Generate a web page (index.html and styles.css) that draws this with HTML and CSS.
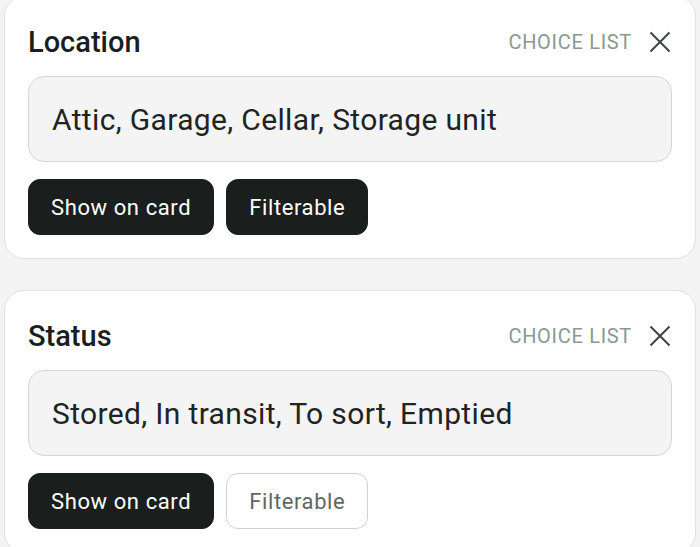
FILE: index.html
```html
<!DOCTYPE html>
<html lang="en">
<head>
<meta charset="utf-8">
<title>Fields</title>
<link rel="stylesheet" href="styles.css">
</head>
<body>
<div class="list">
  <section class="card">
    <div class="card-head">
      <h2 class="title">Location</h2>
      <div class="meta">
        <span class="type">CHOICE LIST</span>
        <svg class="close" viewBox="0 0 24 24" width="24" height="24" aria-hidden="true"><path d="M2.5 2.5 L21.5 21.5 M21.5 2.5 L2.5 21.5"/></svg>
      </div>
    </div>
    <div class="field">Attic, Garage, Cellar, Storage unit</div>
    <div class="chips">
      <span class="chip on">Show on card</span>
      <span class="chip on">Filterable</span>
    </div>
  </section>
  <section class="card">
    <div class="card-head">
      <h2 class="title">Status</h2>
      <div class="meta">
        <span class="type">CHOICE LIST</span>
        <svg class="close" viewBox="0 0 24 24" width="24" height="24" aria-hidden="true"><path d="M2.5 2.5 L21.5 21.5 M21.5 2.5 L2.5 21.5"/></svg>
      </div>
    </div>
    <div class="field">Stored, In transit, To sort, Emptied</div>
    <div class="chips">
      <span class="chip on">Show on card</span>
      <span class="chip off">Filterable</span>
    </div>
  </section>
</div>
</body>
</html>
```
FILE: styles.css
```css
html, body {
  margin: 0;
  padding: 0;
  background: #f2f3f2;
  font-family: Roboto, "Noto Sans", "Liberation Sans", sans-serif;
  color: #1a1f1e;
  overflow: hidden;
}
.list {
  margin-top: -4px;
  padding: 0 4px;
  display: flex;
  flex-direction: column;
  gap: 31px;
}
.card {
  background: #ffffff;
  border: 1px solid #dde2e0;
  border-radius: 20px;
  padding: 23px 23px 23px 23px;
}
.card-head {
  height: 44px;
  display: flex;
  align-items: center;
  justify-content: space-between;
}
.title {
  margin: 0;
  font-size: 29px;
  font-weight: 500;
  line-height: 36px;
  color: #1a1f1e;
}
.meta {
  display: flex;
  align-items: center;
  gap: 16px;
}
.type {
  font-size: 20px;
  letter-spacing: 0.7px;
  color: #8a9792;
}
.close {
  display: block;
  fill: none;
  stroke: #3d4543;
  stroke-width: 2;
}
.field {
  margin-top: 12px;
  height: 84px;
  display: flex;
  align-items: center;
  padding: 0 23px;
  background: #f3f4f3;
  border: 1px solid #cfd8d5;
  border-radius: 16px;
  font-size: 30px;
  letter-spacing: 0.35px;
  color: #1f2422;
}
.chips {
  margin-top: 17px;
  display: flex;
  gap: 12px;
}
.chip {
  box-sizing: border-box;
  height: 56px;
  padding: 0 22px;
  display: flex;
  align-items: center;
  border-radius: 12px;
  font-size: 22px;
  letter-spacing: 0.6px;
  border: 1px solid transparent;
}
.chip.on {
  background: #1a1f1e;
  border-color: #1a1f1e;
  color: #ffffff;
}
.chip.off {
  background: #ffffff;
  border-color: #c9d3cf;
  color: #5d6864;
}
```
